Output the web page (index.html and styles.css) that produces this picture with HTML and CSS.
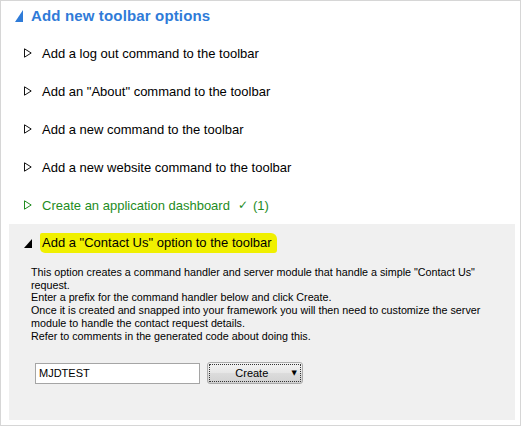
FILE: index.html
```html
<!DOCTYPE html>
<html>
<head>
	<title>Toolbar options</title>
	<meta name="viewport" content="width=device-width, initial-scale=1.0">
	<link rel="stylesheet" href="styles.css">
</head>
<body>
  <div class="frame">
  	<div class="head">
  		<svg class="tri" width="8" height="12" viewBox="0 0 8 12"><path d="M8 0 L8 12 L0 12 Z" fill="#2f7bd8"/></svg>
  		Add new toolbar options
  	</div>

  	<ul class="opts">
  		<li><svg class="open" width="8" height="10" viewBox="0 0 8 10"><path d="M0.5 0.8 L7.2 5 L0.5 9.2 Z" fill="none" stroke="#111" stroke-width="1"/></svg>Add a log out command to the toolbar</li>
  		<li><svg class="open" width="8" height="10" viewBox="0 0 8 10"><path d="M0.5 0.8 L7.2 5 L0.5 9.2 Z" fill="none" stroke="#111" stroke-width="1"/></svg>Add an "About" command to the toolbar</li>
  		<li><svg class="open" width="8" height="10" viewBox="0 0 8 10"><path d="M0.5 0.8 L7.2 5 L0.5 9.2 Z" fill="none" stroke="#111" stroke-width="1"/></svg>Add a new command to the toolbar</li>
  		<li><svg class="open" width="8" height="10" viewBox="0 0 8 10"><path d="M0.5 0.8 L7.2 5 L0.5 9.2 Z" fill="none" stroke="#111" stroke-width="1"/></svg>Add a new website command to the toolbar</li>
  		<li class="done"><svg class="open" width="8" height="10" viewBox="0 0 8 10"><path d="M0.5 0.8 L7.2 5 L0.5 9.2 Z" fill="none" stroke="#1e8c1e" stroke-width="1"/></svg>Create an application dashboard<span class="check">&#10003;</span>(1)</li>
  	</ul>

  	<div class="panel">
  		<div class="panel-head">
  			<svg class="tri" width="8" height="9" viewBox="0 0 8 9"><path d="M8 0 L8 9 L0 9 Z" fill="#000"/></svg>
  			<span class="mark">Add a "Contact Us" option to the toolbar</span>
  		</div>
  		<p class="info">
  			This option creates a command handler and server module that handle a simple "Contact Us" request.<br>
  			Enter a prefix for the command handler below and click Create.<br>
  			Once it is created and snapped into your framework you will then need to customize the server module to handle the contact request details.<br>
  			Refer to comments in the generated code about doing this.
  		</p>
  		<div class="form">
  			<input type="text" value="MJDTEST">
  			<button><span class="label">Create</span><span class="drop">&#9660;</span></button>
  		</div>
  	</div>
  </div>
</body>
</html>
```

FILE: styles.css
```css
*{
	box-sizing: border-box;
	font-family: "Liberation Sans", Arial, sans-serif;
}
body{
	margin: 0;
	background: white;
}
.frame{
	width: 521px;
	height: 426px;
	border: 1px solid #d6d6d6;
	padding: 4px 5px 0 8px;
}
.head{
	display: flex;
	align-items: center;
	height: 20px;
	font-size: 15px;
	font-weight: bold;
	color: #2f7bd8;
	padding-left: 6px;
	letter-spacing: 0.15px;
}
.head .tri{
	margin-right: 8px;
	margin-top: 1px;
}
.opts{
	list-style: none;
	margin: 9px 0 0 0;
	padding: 0;
}
.opts li{
	display: flex;
	align-items: center;
	height: 38px;
	font-size: 13px;
	color: #000;
	padding-left: 15px;
}
.opts .open{
	margin-right: 10px;
	flex: none;
}
.opts li.done{
	color: #1e8c1e;
}
.opts .check{
	font-family: "DejaVu Sans", sans-serif;
	font-size: 12px;
	margin: 0 5px 0 8px;
}
.panel{
	background: #f0f0f0;
	height: 196px;
	padding: 9px 0 0 15px;
}
.panel-head{
	display: flex;
	align-items: center;
	height: 20px;
	font-size: 13px;
}
.panel-head .tri{
	margin-right: 8px;
	margin-top: 1px;
}
.mark{
	background: #f0f000;
	padding: 2px 5px 3px 2px;
	border-radius: 2px 6px 3px 5px;
}
.info{
	margin: 13px 0 0 7px;
	width: 470px;
	font-size: 10.75px;
	line-height: 12.7px;
	color: #000;
}
.form{
	display: flex;
	align-items: center;
	margin: 20px 0 0 11px;
}
.form input{
	width: 165px;
	height: 21px;
	border: 1px solid #a5a5a5;
	padding: 0 3px;
	font-size: 11px;
	color: #000;
	background: white;
	outline: none;
}
.form button{
	margin-left: 7px;
	width: 96px;
	height: 22px;
	border: 1px solid #acacac;
	border-radius: 3px;
	background: linear-gradient(#f3f3f3, #e6e6e6 50%, #dcdcdc 51%, #d2d2d2);
	outline: 1px dotted #333;
	outline-offset: -3px;
	display: flex;
	align-items: center;
	padding: 0 5px 0 0;
	font-size: 11px;
	color: #000;
}
.form .label{
	flex: 1;
	text-align: center;
	padding-left: 4px;
}
.form .drop{
	font-family: "DejaVu Sans", sans-serif;
	font-size: 7px;
}
```
